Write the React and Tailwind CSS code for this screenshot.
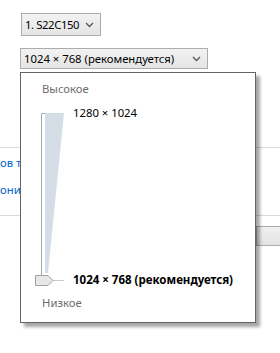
import React from "react";

function Chevron() {
  return (
    <svg width="9" height="6" viewBox="0 0 9 6" className="shrink-0">
      <path d="M1 1 L4.5 4.5 L8 1" fill="none" stroke="#5a5a5a" strokeWidth="1.4" />
    </svg>
  );
}

function Slider() {
  return (
    <svg width="30" height="183" viewBox="0 0 30 183" className="shrink-0">
      {/* wedge */}
      <polygon points="10,8 29,8 13,168 10,168" fill="#d5dee6" />
      {/* bracket */}
      <path d="M10 8.5 H6.5 V170" fill="none" stroke="#a8a8a8" strokeWidth="1" />
      {/* tick */}
      <line x1="18" y1="175.5" x2="29" y2="175.5" stroke="#c9c9c9" strokeWidth="1" />
      {/* thumb */}
      <polygon points="0.5,170.5 13,170.5 18,175.5 13,180.5 0.5,180.5" fill="#e8e8e8" stroke="#a3a3a3" strokeWidth="1" />
    </svg>
  );
}

export default function App() {
  return (
    <div
      className="relative w-[280px] h-[353px] bg-white overflow-hidden text-[11.3px] text-black"
      style={{ fontFamily: '"Noto Sans", "Open Sans", sans-serif' }}
    >
      {/* Background page */}
      <div className="flex flex-col pt-[13px]">
        <div className="ml-[21px] w-[80px] h-[23px] border border-[#acacac] bg-gradient-to-b from-[#f2f2f2] to-[#e5e5e5] flex items-center justify-between pl-[3px] pr-[6px]">
          <span className="leading-4 whitespace-nowrap tracking-[-0.4px]">1. S22C150</span>
          <Chevron />
        </div>
        <div className="ml-[20px] mt-[12px] w-[188px] h-[21px] border border-[#acacac] bg-gradient-to-b from-[#f2f2f2] to-[#e5e5e5] flex items-center justify-between pl-[3px] pr-[6px]">
          <span className="leading-4 whitespace-nowrap">1024 × 768 (рекомендуется)</span>
          <Chevron />
        </div>
        <div className="mt-[78px] h-px bg-[#dadada]" />
        <div className="mt-[7px] leading-4 text-[#0066cc] whitespace-nowrap">ов текста и других элементов</div>
        <div className="mt-[11px] leading-4 text-[#0066cc] whitespace-nowrap">они</div>
        <div className="mt-[17px] h-px bg-[#dadada]" />
        <div className="mt-[10px] ml-[256px] w-[30px] h-[20px] border border-[#adadad] bg-gradient-to-b from-[#f0f0f0] to-[#e3e3e3]" />
      </div>

      {/* Popup */}
      <div className="absolute left-[20px] top-[72px] w-[236px] h-[251px] border border-[#646464] bg-white shadow-[4px_4px_3px_rgba(0,0,0,0.35)] flex flex-col pl-[14px] pt-[8px]">
        <div className="pl-[7px] leading-4 text-[#6d6d6d]">Высокое</div>
        <div className="mt-[8px] flex">
          <Slider />
          <div className="ml-[8px] flex flex-col justify-between">
            <span className="leading-4 whitespace-nowrap">1280 × 1024</span>
            <span className="leading-4 font-bold whitespace-nowrap text-[11.5px]">1024 × 768 (рекомендуется)</span>
          </div>
        </div>
        <div className="mt-[7px] pl-[7px] leading-4 text-[#6d6d6d]">Низкое</div>
      </div>
    </div>
  );
}
